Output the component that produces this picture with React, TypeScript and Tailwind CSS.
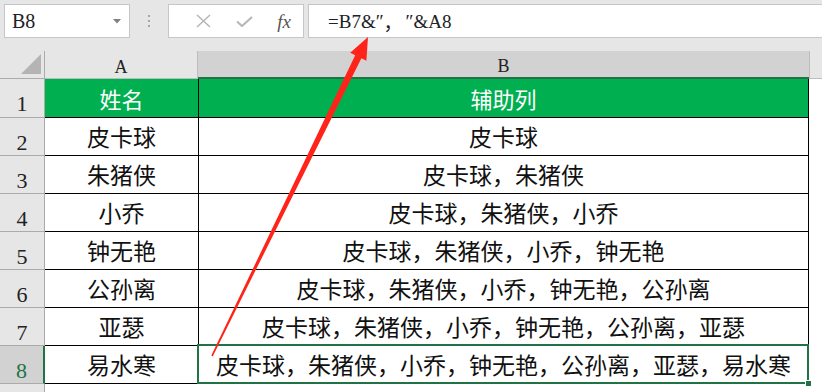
import React from "react";

const rowsA = ["皮卡球", "朱猪侠", "小乔", "钟无艳", "公孙离", "亚瑟", "易水寒"];

function buildB(i: number) {
  return rowsA.slice(0, i + 1).join("，");
}

export default function App() {
  return (
    <div className="relative w-[822px] h-[392px] overflow-hidden bg-white">
      {/* Formula bar */}
      <div className="h-[51px] bg-[#e6e6e6] flex items-start pt-[4px] pl-[4px]">
        <div className="w-[126px] h-[34px] bg-white border border-[#c6c6c6] flex items-center justify-between pl-[7px] pr-[8px]">
          <span className="font-['Liberation_Serif',serif] text-[20px] leading-none text-[#222]">B8</span>
          <svg width="8" height="5" viewBox="0 0 8 5">
            <path d="M0 0 L8 0 L4 4.5 Z" fill="#808080" />
          </svg>
        </div>
        <div className="w-[38px] h-[34px] flex flex-col items-center justify-center gap-[3px]">
          <div className="w-[2px] h-[2px] bg-[#a6a6a6]" />
          <div className="w-[2px] h-[2px] bg-[#a6a6a6]" />
          <div className="w-[2px] h-[2px] bg-[#a6a6a6]" />
        </div>
        <div className="w-[136px] h-[34px] bg-white border border-[#c6c6c6] flex items-center">
          <div className="w-[50px] flex justify-end pr-[8px]">
            <svg width="15" height="14" viewBox="0 0 15 14">
              <path d="M1 1 L14 13 M14 1 L1 13" stroke="#b3b3b3" strokeWidth="1.4" fill="none" />
            </svg>
          </div>
          <div className="w-[50px] flex justify-center">
            <svg width="17" height="11" viewBox="0 0 17 11">
              <path d="M1 5.5 L6 10 L16 1" stroke="#b8b8b8" strokeWidth="2.2" fill="none" />
            </svg>
          </div>
          <div className="flex-1 flex justify-center pr-[4px]">
            <span className="font-['Liberation_Serif',serif] italic text-[19px] leading-none text-[#555]">fx</span>
          </div>
        </div>
        <div className="ml-[4px] flex-1 h-[34px] bg-white border border-r-0 border-[#c6c6c6] flex items-center pl-[19px] font-['Liberation_Serif',serif] text-[19px] leading-none text-[#222] whitespace-pre">
          <span>=B7&amp;″</span>
          <span className="w-[22px] font-['Noto_Sans_CJK_SC',sans-serif]">，</span>
          <span>″&amp;A8</span>
        </div>
      </div>

      {/* Column headers */}
      <div className="h-[28px] flex bg-[#e6e6e6] font-['Liberation_Serif',serif] text-[18px] text-[#222]">
        <div className="w-[45px] border-r border-b border-[#ababab] flex items-end justify-end pr-[3px] pb-[4px]">
          <svg width="20" height="20" viewBox="0 0 20 20">
            <path d="M20 0 L20 20 L0 20 Z" fill="#b4b4b4" />
          </svg>
        </div>
        <div className="w-[153px] border-b border-r border-[#bdbdbd] flex items-center justify-center pt-[4px] leading-none">A</div>
        <div className="w-[611px] bg-[#d2d2d2] border-b-2 border-[#217346] flex items-center justify-center pt-[4px] leading-none">B</div>
        <div className="flex-1 border-b border-l border-[#bdbdbd]" />
      </div>

      {/* Row 1 */}
      <div className="h-[39px] flex">
        <div className="w-[45px] bg-[#e6e6e6] border-r border-b border-[#ababab] flex items-end justify-center pb-[2px] font-['Liberation_Serif',serif] text-[22px] leading-none text-[#222]">1</div>
        <div className="w-[154px] bg-[#00b050] border-r border-b border-black flex items-center justify-center font-['Noto_Sans_CJK_SC',sans-serif] text-[22px] leading-none text-white">姓名</div>
        <div className="w-[610px] bg-[#00b050] border-r border-b border-black flex items-center justify-center font-['Noto_Sans_CJK_SC',sans-serif] text-[22px] leading-none text-white">辅助列</div>
        <div className="flex-1" />
      </div>

      {rowsA.map((name, i) => {
        const sel = i === 6;
        return (
          <div key={i} className="h-[38px] flex">
            <div
              className={
                sel
                  ? "w-[45px] bg-[#d2d2d2] border-r-2 border-r-[#217346] border-b border-b-[#ababab] flex items-end justify-center pb-[1px] font-['Liberation_Serif',serif] text-[22px] leading-none text-[#217346]"
                  : "w-[45px] bg-[#e6e6e6] border-r border-b border-[#ababab] flex items-end justify-center pb-[1px] font-['Liberation_Serif',serif] text-[22px] leading-none text-[#222]"
              }
            >
              {i + 2}
            </div>
            <div className="w-[154px] border-r border-b border-black flex items-center justify-center font-['Noto_Sans_CJK_SC',sans-serif] text-[23px] leading-none text-[#111]">
              {name}
            </div>
            <div className="relative w-[610px] border-r border-b border-black flex items-center justify-center font-['Noto_Sans_CJK_SC',sans-serif] text-[23px] leading-none text-[#111]">
              {buildB(i)}
              {sel && (
                <div className="absolute -top-[2px] -left-[2px] -right-[1px] -bottom-[1px] border-2 border-[#217346]">
                  <div className="absolute -right-[5px] -bottom-[5px] w-[7px] h-[7px] bg-[#217346] border border-white" />
                </div>
              )}
            </div>
            <div className="flex-1" />
          </div>
        );
      })}

      {/* Row 9 partial */}
      <div className="h-[20px] flex">
        <div className="w-[45px] bg-[#e6e6e6] border-r border-[#ababab]" />
        <div className="flex-1" />
      </div>

      {/* Red annotation arrow */}
      <svg className="absolute inset-0 pointer-events-none" width="822" height="392" viewBox="0 0 822 392">
        <polygon
          points="368,37 366.4,60.7 361.4,58.3 212.7,356.4 211.3,355.6 355.2,55.3 350.2,52.8"
          fill="#ff2419"
        />
      </svg>
    </div>
  );
}
